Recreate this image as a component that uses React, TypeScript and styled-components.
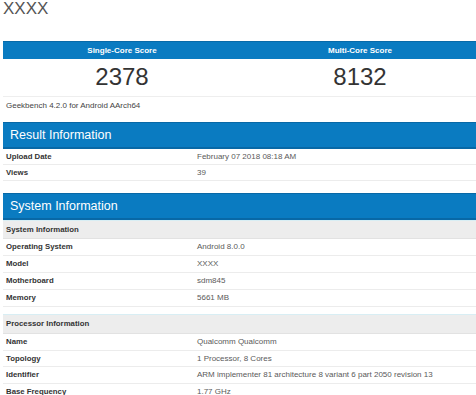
import React from "react";
import styled, { createGlobalStyle } from "styled-components";

const GlobalStyle = createGlobalStyle`
  html, body {
    margin: 0;
    padding: 0;
    background: #fff;
    overflow: hidden;
    font-family: "Liberation Sans", Arial, sans-serif;
    color: #333;
  }
`;

const Page = styled.div`
  width: 476px;
  margin-left: 3px;
`;

const Title = styled.h1`
  margin: 0;
  height: 41px;
  font-size: 17px;
  line-height: 18px;
  font-weight: normal;
  color: #555;
`;

const BLUE = "#0a7bc1";

const ScoreTable = styled.div`
  display: grid;
  grid-template-columns: 1fr 1fr;
`;

const ScoreHead = styled.div`
  background: ${BLUE};
  border-top: 1px solid #086aa8;
  height: 17px;
  line-height: 17px;
  text-align: center;
  color: #fff;
  font-size: 8px;
  font-weight: bold;
`;

const ScoreValue = styled.div`
  height: 37px;
  line-height: 36px;
  text-align: center;
  font-size: 24px;
  color: #333;
  border-bottom: 1px solid #eee;
`;

const Caption = styled.div`
  font-size: 8px;
  line-height: 14px;
  padding: 2px 3px 0;
  color: #444;
  height: 23px;
`;

const SectionHead = styled.div`
  background: ${BLUE};
  border-top: 1px solid #0868a6;
  border-bottom: 2px solid #0868a6;
  height: 24px;
  line-height: 24px;
  padding-left: 7px;
  color: #fff;
  font-size: 12.5px;
`;

const SubHead = styled.div<{ $h: number }>`
  background: #ededed;
  border-top: 1px solid #d8eef4;
  border-bottom: 1px solid #e2e2e2;
  height: ${(p) => p.$h}px;
  line-height: ${(p) => p.$h}px;
  padding-left: 3px;
  font-size: 7.8px;
  font-weight: bold;
  color: #333;
`;

const Row = styled.div<{ $h: number }>`
  display: grid;
  grid-template-columns: 194px 1fr;
  height: ${(p) => p.$h}px;
  line-height: ${(p) => p.$h}px;
  border-bottom: 1px solid #ececec;
`;

const Label = styled.div`
  padding-left: 3px;
  font-size: 7.8px;
  font-weight: bold;
  color: #333;
`;

const Value = styled.div`
  font-size: 8px;
  color: #5a5a5a;
  white-space: nowrap;
`;

const Table = styled.div<{ $gap: number }>`
  margin-bottom: ${(p) => p.$gap}px;
`;

type Item = [string, string];

const result: Item[] = [
  ["Upload Date", "February 07 2018 08:18 AM"],
  ["Views", "39"],
];

const system: Item[] = [
  ["Operating System", "Android 8.0.0"],
  ["Model", "XXXX"],
  ["Motherboard", "sdm845"],
  ["Memory", "5661 MB"],
];

const processor: Item[] = [
  ["Name", "Qualcomm Qualcomm"],
  ["Topology", "1 Processor, 8 Cores"],
  ["Identifier", "ARM implementer 81 architecture 8 variant 6 part 2050 revision 13"],
  ["Base Frequency", "1.77 GHz"],
];

const Rows = ({ items, h }: { items: Item[]; h: number }) => (
  <>
    {items.map(([k, v]) => (
      <Row key={k} $h={h}>
        <Label>{k}</Label>
        <Value>{v}</Value>
      </Row>
    ))}
  </>
);

export default function App() {
  return (
    <Page>
      <GlobalStyle />
      <Title>XXXX</Title>

      <ScoreTable>
        <ScoreHead>Single-Core Score</ScoreHead>
        <ScoreHead>Multi-Core Score</ScoreHead>
        <ScoreValue>2378</ScoreValue>
        <ScoreValue>8132</ScoreValue>
      </ScoreTable>
      <Caption>Geekbench 4.2.0 for Android AArch64</Caption>

      <SectionHead>Result Information</SectionHead>
      <Table $gap={12}>
        <Rows items={result} h={15} />
      </Table>

      <SectionHead>System Information</SectionHead>
      <Table $gap={7}>
        <SubHead $h={17}>System Information</SubHead>
        <Rows items={system} h={16} />
      </Table>
      <Table $gap={0}>
        <SubHead $h={18}>Processor Information</SubHead>
        <Rows items={processor} h={15.5} />
      </Table>
    </Page>
  );
}
